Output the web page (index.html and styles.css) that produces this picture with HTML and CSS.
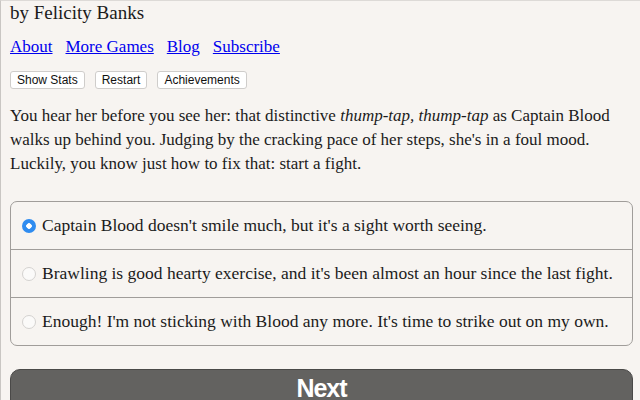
FILE: index.html
```html
<!DOCTYPE html>
<html lang="en">
<head>
  <meta charset="UTF-8">
  <title>Captain Blood</title>
  <link rel="stylesheet" href="styles.css">
</head>
<body>
  <div id="container">
    <div id="author">by Felicity Banks</div>
    <div class="links">
      <a href="#">About</a>
      <a href="#">More Games</a>
      <a href="#">Blog</a>
      <a href="#">Subscribe</a>
    </div>
    <div class="buttons">
      <button class="small-btn">Show Stats</button>
      <button class="small-btn">Restart</button>
      <button class="small-btn">Achievements</button>
    </div>
    <p class="story">You hear her before you see her: that distinctive <i>thump-tap, thump-tap</i> as Captain Blood walks up behind you. Judging by the cracking pace of her steps, she's in a foul mood. Luckily, you know just how to fix that: start a fight.</p>
    <div class="choices">
      <div class="choice">
        <span class="radio checked"></span>
        <span>Captain Blood doesn't smile much, but it's a sight worth seeing.</span>
      </div>
      <div class="choice">
        <span class="radio"></span>
        <span>Brawling is good hearty exercise, and it's been almost an hour since the last fight.</span>
      </div>
      <div class="choice">
        <span class="radio"></span>
        <span>Enough! I'm not sticking with Blood any more. It's time to strike out on my own.</span>
      </div>
    </div>
    <button class="next">Next</button>
  </div>
</body>
</html>
```

FILE: styles.css
```css
body {
  margin: 0;
  background-color: #f7f4f1;
  font-family: "Liberation Serif", serif;
  color: #1b1b1b;
  overflow: hidden;
}

#container {
  border-left: 1px solid #c9c6c3;
  border-top: 1px solid #dddad7;
  padding: 0 7px 0 9px;
  min-height: 400px;
}

#author {
  font-size: 19px;
  line-height: 22px;
  padding-top: 1px;
}

.links {
  margin-top: 11px;
  display: flex;
  gap: 13px;
  font-size: 17px;
  line-height: 24px;
}

.links a {
  color: #0000ee;
}

.buttons {
  margin-top: 12px;
  display: flex;
  gap: 10px;
}

.small-btn {
  font-family: "Liberation Sans", Arial, sans-serif;
  font-size: 12px;
  background: #ffffff;
  border: 1px solid #cfcdcb;
  border-radius: 3px;
  padding: 0 6px;
  height: 18px;
  line-height: 16px;
  color: #111;
}

.story {
  margin: 15px 0 0 0;
  font-size: 17px;
  line-height: 24px;
}

.choices {
  margin-top: 25px;
  border: 1px solid #a09d9a;
  border-radius: 7px;
}

.choice {
  display: flex;
  align-items: center;
  gap: 6px;
  height: 47px;
  padding-left: 11px;
  font-size: 17.5px;
  border-top: 1px solid #a09d9a;
}

.choice:first-child {
  border-top: none;
}

.radio {
  width: 14px;
  height: 14px;
  border-radius: 50%;
  border: 1px solid #d4d2d0;
  background: #fbfaf9;
  box-sizing: border-box;
  flex-shrink: 0;
}

.radio.checked {
  border: none;
  background: radial-gradient(circle, #ffffff 0, #ffffff 2.5px, #2f8cf0 3px);
}

.next {
  display: block;
  width: 100%;
  margin-top: 23px;
  height: 44px;
  background: #636260;
  border: 1px solid #4a4948;
  border-radius: 10px;
  color: #ffffff;
  font-family: "Liberation Sans", Arial, sans-serif;
  font-weight: bold;
  font-size: 25px;
  letter-spacing: -1px;
  padding: 0 0 6px 0;
}
```
